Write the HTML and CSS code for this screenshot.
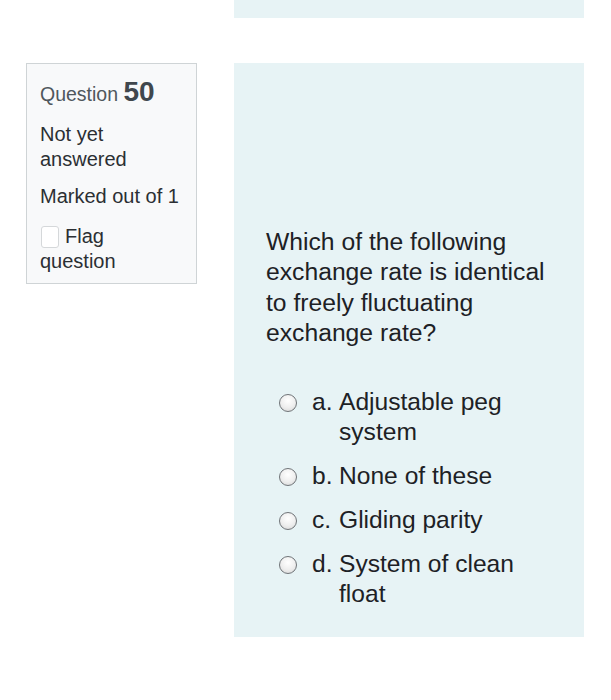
FILE: index.html
```html
<!DOCTYPE html>
<html>
<head>
<meta charset="utf-8">
<link rel="stylesheet" href="styles.css">
</head>
<body>
<div class="page">
  <div class="row prev">
    <div class="side"></div>
    <div class="content prev-content"></div>
  </div>
  <div class="row">
    <div class="side">
      <div class="info">
        <h3 class="qno">Question <span class="num">50</span></h3>
        <div class="state">Not yet answered</div>
        <div class="grade">Marked out of 1</div>
        <div class="flag"><span class="checkbox"></span>Flag question</div>
      </div>
    </div>
    <div class="content">
      <div class="qtext">Which of the following exchange rate is identical to freely fluctuating exchange rate?</div>
      <div class="answers">
        <div class="opt"><span class="radio"></span><span class="letter">a.</span><span class="otext">Adjustable peg system</span></div>
        <div class="opt"><span class="radio"></span><span class="letter">b.</span><span class="otext">None of these</span></div>
        <div class="opt"><span class="radio"></span><span class="letter">c.</span><span class="otext">Gliding parity</span></div>
        <div class="opt"><span class="radio"></span><span class="letter">d.</span><span class="otext">System of clean float</span></div>
      </div>
    </div>
  </div>
</div>
</body>
</html>
```
FILE: styles.css
```css
html, body {
  margin: 0;
  padding: 0;
  background: #ffffff;
}
body {
  font-family: "Liberation Sans", Arial, sans-serif;
  color: #1d2125;
}
.page {
  display: flex;
  flex-direction: column;
  gap: 45px;
  padding-left: 26px;
}
.row {
  display: flex;
  gap: 37px;
  align-items: flex-start;
}
.side {
  width: 171px;
  flex: none;
}
.content {
  width: 350px;
  flex: none;
  background: #e7f3f5;
  box-sizing: border-box;
  padding: 164px 28px 28px 32px;
}
.prev-content {
  height: 18px;
  padding: 0;
}
.info {
  box-sizing: border-box;
  width: 171px;
  border: 1px solid #cfd4d6;
  background: #f8f9fa;
  padding: 12px 16px 10px 13px;
  color: #2b2f33;
  font-size: 20px;
}
.qno {
  margin: 0;
  font-weight: normal;
  font-size: 19.5px;
  line-height: 32px;
  color: #4f575d;
}
.num {
  font-size: 28px;
  font-weight: bold;
  color: #40474d;
}
.state {
  margin-top: 12px;
  line-height: 25px;
}
.grade {
  margin-top: 12px;
  line-height: 25px;
}
.flag {
  margin-top: 15px;
  line-height: 24.5px;
}
.checkbox {
  display: inline-block;
  width: 18px;
  height: 22px;
  box-sizing: border-box;
  border: 1px solid #d5d8da;
  border-radius: 3px;
  background: #ffffff;
  vertical-align: -5px;
  margin-left: 1px;
  margin-right: 6px;
}
.qtext {
  font-size: 24.7px;
  line-height: 30.4px;
}
.answers {
  margin-top: 38px;
  padding-left: 14px;
  display: flex;
  flex-direction: column;
  gap: 14px;
  font-size: 24.6px;
  line-height: 30px;
}
.opt {
  display: flex;
  align-items: flex-start;
}
.radio {
  flex: none;
  width: 18px;
  height: 18px;
  box-sizing: border-box;
  border: 1.5px solid #707478;
  border-radius: 50%;
  background: radial-gradient(circle at 50% 35%, #ffffff 0%, #eeeeee 55%, #d3d3d3 100%);
  margin-top: 7px;
  margin-left: -1px;
  margin-right: 15px;
}
.letter {
  flex: none;
  width: 27px;
}
.otext {
  flex: 1;
}
```
